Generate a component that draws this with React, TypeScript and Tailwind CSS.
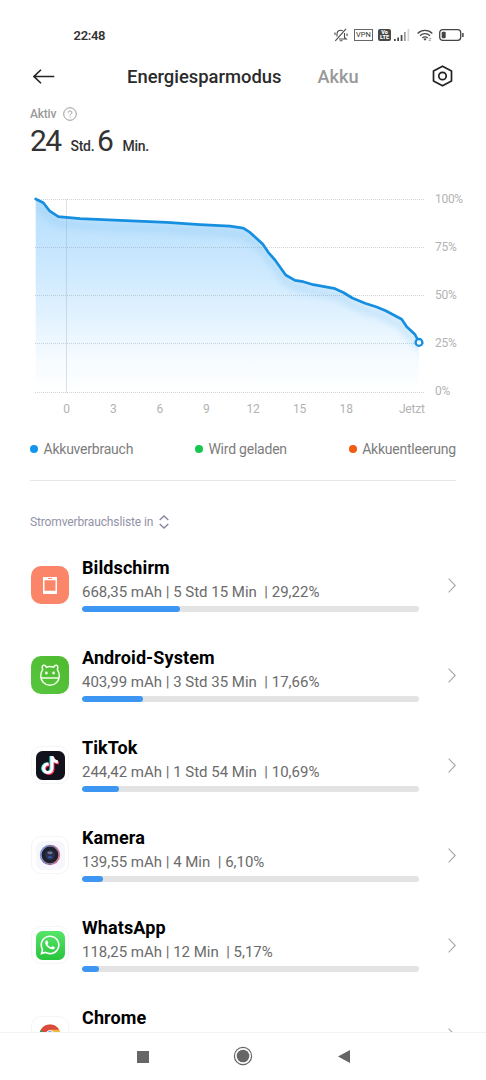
import type { ReactNode } from 'react'
import { FaTiktok, FaWhatsapp } from 'react-icons/fa'

interface AppUsage {
  name: string
  details: string
  percent: number
  icon: ReactNode
}

const LINE =
  'M35.7 199 L43.3 202.7 L49.5 210.8 L58.3 216.6 L80 218.6 L120 220.4 L166.7 222.3 L200 224.7 L230 226.2 L243.3 228.2 L250 232.4 L262.7 244 L268.3 252.3 L275 260 L285.7 275 L295 280.3 L303.3 281.7 L313.3 284.7 L334 288.3 L343.3 292.5 L352.3 298 L365 303.3 L376.7 307 L385.7 310.8 L401.7 319.3 L406.7 326.8 L415 334.5 L419 342.4'

const GRID_LINES = [199.5, 247.5, 295.5, 343.5, 392.5]
const PERCENT_LABELS = ['100%', '75%', '50%', '25%', '0%']
const HOUR_LABELS = ['0', '3', '6', '9', '12', '15', '18']

function AppIconFrame({ children }: { children: ReactNode }) {
  return (
    <div className="flex size-[38px] items-center justify-center rounded-[10px] border border-[#f5f5f5] bg-white">
      {children}
    </div>
  )
}

function ScreenIcon() {
  return (
    <div className="flex size-[38px] items-center justify-center rounded-[10px] bg-[#fa8569]">
      <svg width="14" height="17" viewBox="0 0 14 17" fill="none">
        <path fillRule="evenodd" fill="#fff" d="M0 0h14v17H0zM1.500 3.200v10.600h11V3.200z" />
        <path d="M5 1.500h4" stroke="#fa8569" strokeWidth="1" />
      </svg>
    </div>
  )
}

function AndroidIcon() {
  return (
    <div className="flex size-[38px] items-center justify-center rounded-[10px] bg-linear-to-bl from-[#4fba2e] to-[#57c640]">
      <svg width="22" height="22" viewBox="0 0 22 22" fill="none" stroke="#f0ffe9" strokeWidth="1.500">
        <path d="M3.700 5.500C2.700 3.200 3.300 1.600 4.400 1.300c1.200-.3 2.400.6 3 1.900 2.300-.8 4.900-.8 7.200 0 .6-1.300 1.800-2.200 3-1.900 1.100.3 1.700 1.900.7 4.200C19.600 7.300 20.300 9.300 20.300 12c0 5-4 9.200-9.300 9.200S1.700 17 1.700 12c0-2.700.7-4.700 2-6.500z" />
        <path d="M2 14h18" />
        <circle cx="7.400" cy="9" r="1.400" fill="#f0ffe9" stroke="none" />
        <circle cx="14.600" cy="9" r="1.400" fill="#f0ffe9" stroke="none" />
      </svg>
    </div>
  )
}

function TikTokIcon() {
  return (
    <AppIconFrame>
      <div className="relative size-[29px] rounded-[6.500px] bg-[#11121c]">
        <FaTiktok className="absolute top-[5px] left-[4.700px] size-[18px] text-[#25f4ee]" />
        <FaTiktok className="absolute top-[6px] left-[6.200px] size-[18px] text-[#fe2c55]" />
        <FaTiktok className="absolute top-[5.500px] left-[5.400px] size-[18px] text-white" />
      </div>
    </AppIconFrame>
  )
}

function CameraIcon() {
  return (
    <AppIconFrame>
      <div className="flex size-[29px] items-center justify-center rounded-[7px] bg-[#f7f6fc]">
        <svg width="22" height="22" viewBox="0 0 22 22">
          <defs>
            <linearGradient id="ring" x1="0" x2="1" y1="0.300" y2="0.600">
              <stop offset="0" stopColor="#739be8" />
              <stop offset="0.600" stopColor="#8b669b" />
              <stop offset="1" stopColor="#ef718e" />
            </linearGradient>
          </defs>
          <circle cx="11" cy="11" r="10.200" fill="url(#ring)" />
          <circle cx="11" cy="11" r="8.900" fill="#a9a0c4" />
          <circle cx="11" cy="11" r="8.400" fill="#20202b" />
          <circle cx="11" cy="11" r="4.800" fill="#2c3050" />
          <ellipse cx="11" cy="8.800" rx="2.600" ry="1.400" fill="#727790" />
          <ellipse cx="11" cy="13.200" rx="2.300" ry="1.300" fill="#34539a" />
        </svg>
      </div>
    </AppIconFrame>
  )
}

function WhatsAppIcon() {
  return (
    <AppIconFrame>
      <div className="flex size-[29px] items-center justify-center rounded-[6.500px] bg-linear-to-b from-[#55e568] to-[#27c43c]">
        <FaWhatsapp className="size-[22px] text-white" />
      </div>
    </AppIconFrame>
  )
}

function ChromeIcon() {
  return (
    <AppIconFrame>
      <svg width="22" height="22" viewBox="0 0 24 24">
        <circle cx="12" cy="12" r="11.500" fill="#f4b73b" />
        <path d="M2 6.300A11.500 11.500 0 0 0 12 23.500L12 12z" fill="#279b58" />
        <path d="M2 6.300A11.500 11.500 0 0 1 22 6.300H12L6 10z" fill="#db4a3f" />
        <circle cx="12" cy="12" r="5.200" fill="#fff" />
        <circle cx="12" cy="12" r="4" fill="#4a83ea" />
      </svg>
    </AppIconFrame>
  )
}

const APPS: AppUsage[] = [
  { name: 'Bildschirm', details: '668,35 mAh | 5 Std 15 Min  | 29,22%', percent: 29.22, icon: <ScreenIcon /> },
  { name: 'Android-System', details: '403,99 mAh | 3 Std 35 Min  | 17,66%', percent: 18, icon: <AndroidIcon /> },
  { name: 'TikTok', details: '244,42 mAh | 1 Std 54 Min  | 10,69%', percent: 11.1, icon: <TikTokIcon /> },
  { name: 'Kamera', details: '139,55 mAh | 4 Min  | 6,10%', percent: 6.1, icon: <CameraIcon /> },
  { name: 'WhatsApp', details: '118,25 mAh | 12 Min  | 5,17%', percent: 5.17, icon: <WhatsAppIcon /> },
  { name: 'Chrome', details: '', percent: 0, icon: <ChromeIcon /> },
]

function StatusBar() {
  return (
    <div className="flex h-[70px] shrink-0 items-center justify-between pr-[22px] pl-[73.500px]">
      <span className="mt-[2px] text-[13px] font-semibold tracking-[-0.300px] text-[#333]">22:48</span>
      <div className="flex items-center">
        {/* muted bell */}
        <svg className="mr-[6px]" width="14" height="14" viewBox="0 0 14 14" fill="none" stroke="#4a4a4a" strokeWidth="1.100">
          <path d="M12 .8 1.300 12.800M3 8.500V6C3 3.700 4.500 2.200 6.800 2.200c.8 0 1.400.2 2 .5M10.500 5v4.500l1.700 1.500H5M5.800 12.800h2.600M1 4.500v2.500M13 5.500v2.500" />
        </svg>
        <span className="mr-[5px] flex h-[12px] w-[19px] items-center justify-center border border-[#666] text-[7.500px] leading-none text-[#333]">
          VPN
        </span>
        <span className="mr-[3px] flex h-[12px] w-[13px] flex-col items-center justify-center rounded-[2px] bg-[#484848] text-[5.500px] leading-[5px] font-black text-white">
          <span>Vo</span>
          <span>LTE</span>
        </span>
        <svg className="mr-[7px]" width="16" height="12" viewBox="0 0 16 12">
          <path d="M0 10h1.700v2H0zM3.300 8.500H5V12H3.300zM6.700 6h1.700v6H6.700z" fill="#444" />
          <path d="M10 3h1.700v9H10z" fill="#999" />
          <path d="M13.500 0h1.700v12h-1.700z" fill="#d4d4d4" />
        </svg>
        <svg className="mr-[6px]" width="16" height="13" viewBox="0 0 17 13" fill="none" stroke="#4a4a4a" strokeWidth="1.400">
          <path d="M.7 4.300C5-.1 12-.1 16.300 4.300M3.200 6.800c3-3 7.600-3 10.600 0M5.700 9.200c1.600-1.600 4-1.600 5.600 0" />
          <path d="M6.800 10.200 8.500 12l1.700-1.800q-1.700-1.300-3.400 0z" fill="#4a4a4a" stroke="none" />
          <path d="M12.500 9.500h2.500l-2.500 2.500h2.500" stroke="#999" strokeWidth=".8" />
        </svg>
        <svg width="25" height="12" viewBox="0 0 25 12" fill="none">
          <rect x=".7" y=".7" width="21" height="10.600" rx="3" stroke="#444" strokeWidth="1.300" />
          <rect x="2.700" y="2.700" width="4" height="6.600" rx="1" fill="#444" />
          <path d="M23.900 4v4" stroke="#444" strokeWidth="1.500" />
        </svg>
      </div>
    </div>
  )
}

function Header() {
  return (
    <div className="-mt-[10px] mb-[10px] flex h-[32px] shrink-0 items-center px-[33px]">
      <svg width="22" height="15" viewBox="0 0 22 15" fill="none" stroke="#252525" strokeWidth="1.600">
        <path d="M21.300 7.500H1M8 .7 1 7.500l7 6.800" />
      </svg>
      <span className="mt-[1px] ml-[72px] w-[155px] text-[18.400px] font-medium whitespace-nowrap text-[#2b2b2b]">
        Energiesparmodus
      </span>
      <span className="mt-[1px] ml-[35.500px] text-[18.200px] font-medium text-[#999]">Akku</span>
      <svg className="ml-auto" width="21" height="22" viewBox="0 0 21 22" fill="none" stroke="#222" strokeWidth="1.700" strokeLinejoin="round">
        <path d="M10.500 1.200 19.500 6v10l-9 4.800-9-4.800V6z" />
        <circle cx="10.500" cy="11" r="3.700" />
      </svg>
    </div>
  )
}

function BatteryChart() {
  return (
    <div className="shrink-0">
      <div className="flex h-[210px]">
        <svg className="ml-[30px] shrink-0" width="400" height="210" viewBox="30 190 400 210" fill="none">
          <defs>
            <linearGradient id="area" gradientUnits="userSpaceOnUse" x1="0" x2="0" y1="199" y2="392">
              <stop offset="0" stopColor="#b5defd" />
              <stop offset="0.400" stopColor="#cfeafe" />
              <stop offset="0.800" stopColor="#f3faff" />
              <stop offset="1" stopColor="#ffffff" />
            </linearGradient>
            <clipPath id="under">
              <path d={`${LINE} V392 H35.7 Z`} />
            </clipPath>
            <filter id="soft" x="-10%" y="-10%" width="120%" height="130%">
              <feGaussianBlur stdDeviation="3" />
            </filter>
          </defs>
          <path d={`${LINE} V392 H35.7 Z`} fill="url(#area)" />
          <g clipPath="url(#under)">
            <path d={LINE} transform="translate(0 7)" stroke="#8cc8f2" strokeWidth="6" opacity="0.350" filter="url(#soft)" />
          </g>
          {GRID_LINES.map((y) => (
            <path key={y} d={`M35 ${y}H424`} stroke="#8a979f" strokeOpacity="0.400" strokeDasharray="1 1" />
          ))}
          <path d="M66.500 199V393" stroke="#8ba0ae" strokeOpacity="0.300" />
          <path d={LINE} stroke="#168fe0" strokeWidth="2.700" strokeLinejoin="round" strokeLinecap="round" />
          <circle cx="419" cy="342.400" r="3.400" fill="#fff" stroke="#168fe0" strokeWidth="2.300" />
        </svg>
        <div className="-mt-[15.500px] ml-[5px] flex h-[241px] flex-col text-[12px] leading-[48.200px] tracking-[-0.300px] text-[#b3b3b3]">
          {PERCENT_LABELS.map((label) => (
            <span key={label} className="h-[48.200px]">{label}</span>
          ))}
        </div>
      </div>
      <div className="flex h-[18px] pl-[43.300px] text-[12px] leading-[18px] tracking-[-0.200px] text-[#b3b3b3]">
        {HOUR_LABELS.map((label) => (
          <span key={label} className="w-[46.600px] text-center">{label}</span>
        ))}
        <span className="ml-[29.500px]">Jetzt</span>
      </div>
    </div>
  )
}

function LegendItem({ color, label }: { color: string; label: string }) {
  return (
    <div className="flex items-center gap-[5.500px]">
      <span className={`-mt-[1px] size-[8px] rounded-full ${color}`} />
      <span>{label}</span>
    </div>
  )
}

function UsageRow({ app }: { app: AppUsage }) {
  return (
    <div className="flex h-[90px] shrink-0 items-center pr-[30px] pl-[31px]">
      {app.icon}
      <div className="ml-[13px] h-[55px] w-[337px]">
        <div className="text-[18px] leading-[20px] font-bold tracking-[0.100px] text-black">{app.name}</div>
        <div className="mt-[4px] h-[20px] text-[15px] leading-[20px] whitespace-pre text-[#6b6b6b]">{app.details}</div>
        <div className="mt-[4px] h-[6px] overflow-hidden rounded-full bg-[#e3e3e3]">
          <div className="h-full rounded-full bg-[#3c96f2]" style={{ width: `${app.percent}%` }} />
        </div>
      </div>
      <svg className="ml-auto" width="8" height="15" viewBox="0 0 8 15" fill="none" stroke="#a6a6a6" strokeWidth="1.100">
        <path d="M.6.6 7.300 7.500.6 14.400" />
      </svg>
    </div>
  )
}

function NavBar() {
  return (
    <div className="flex h-[48px] shrink-0 items-center border-t border-[#f3f3f3] bg-white pb-[2px] pl-[137px]">
      <div className="mt-[2px] size-[12px] bg-[#666]" />
      <svg className="ml-[84px]" width="20" height="20" viewBox="0 0 20 20" fill="none">
        <circle cx="10" cy="10" r="8.600" stroke="#666" strokeWidth="1.200" />
        <circle cx="10" cy="10" r="6.300" fill="#666" />
      </svg>
      <svg className="mt-[2px] ml-[84.500px]" width="12" height="13" viewBox="0 0 12 13">
        <path d="M12 0v13L0 6.500z" fill="#666" />
      </svg>
    </div>
  )
}

export default function App() {
  return (
    <div className="flex h-[1080px] w-[486px] flex-col overflow-hidden bg-white font-[Roboto,sans-serif]">
      <StatusBar />
      <Header />
      <div className="flex h-[88px] shrink-0 flex-col pl-[30px]">
        <div className="mt-[4px] flex h-[16px] items-center text-[12px] font-medium tracking-[-0.200px] text-[#999]">
          Aktiv
          <svg className="ml-[7px]" width="14" height="14" viewBox="0 0 14 14" fill="none" stroke="#999" strokeWidth="1">
            <circle cx="7" cy="7" r="6.300" />
            <path d="M5.200 5.700c0-2.300 3.700-2.300 3.700 0 0 1.200-1.800 1.300-1.800 2.700M7.100 9.500v1" />
          </svg>
        </div>
        <div className="mt-[3px] flex h-[32px] items-baseline leading-[32px] text-[#333]">
          <span className="w-[40.500px] text-[30px] tracking-[-1.500px]">24</span>
          <span className="w-[26.500px] text-[14px] font-medium tracking-[-0.300px]">Std.</span>
          <span className="w-[25.500px] text-[30px]">6</span>
          <span className="text-[14px] font-medium tracking-[-0.300px]">Min.</span>
        </div>
      </div>
      <BatteryChart />
      <div className="mx-[30px] mt-[20px] flex h-[22px] shrink-0 items-center justify-between text-[14px] tracking-[-0.230px] text-[#7d7d7d]">
        <LegendItem color="bg-[#1395ee]" label="Akkuverbrauch" />
        <LegendItem color="bg-[#13c84c]" label="Wird geladen" />
        <LegendItem color="bg-[#f35a13]" label="Akkuentleerung" />
      </div>
      <div className="mx-[30px] mt-[20px] h-px shrink-0 bg-[#e6e6e6]" />
      <div className="mt-[31px] flex h-[20px] shrink-0 items-center pl-[30px] text-[12px] tracking-[-0.130px] text-[#9292a8]">
        Stromverbrauchsliste in
        <svg className="ml-[6px]" width="10" height="14" viewBox="0 0 10 14" fill="none" stroke="#8585a0" strokeWidth="1.400">
          <path d="M.7 5 5 1l4.300 4M.7 9 5 13l4.300-4" />
        </svg>
      </div>
      <div className="mt-[8px] flex min-h-0 flex-1 flex-col overflow-hidden">
        {APPS.map((app) => (
          <UsageRow key={app.name} app={app} />
        ))}
      </div>
      <NavBar />
    </div>
  )
}
